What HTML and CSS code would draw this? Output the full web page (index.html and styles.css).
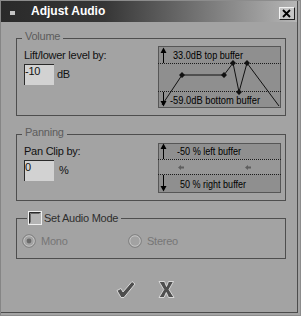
FILE: index.html
```html
<!DOCTYPE html>
<html>
<head>
<meta charset="utf-8">
<link rel="stylesheet" href="styles.css">
</head>
<body>
<div class="window">
  <div class="frame">
    <div class="titlebar">
      <span class="sysicon"></span>
      <span class="title">Adjust Audio</span>
      <span class="close">
        <svg width="14" height="11" viewBox="0 0 14 11"><path d="M3 2L10 9M10 2L3 9" stroke="#000" stroke-width="1.8" fill="none"/></svg>
      </span>
    </div>
    <div class="content">
      <div class="group vol">
        <span class="legend">Volume</span>
        <div class="col">
          <div class="lbl">Lift/lower level by:</div>
          <div class="field-row"><div class="input">-10</div><span class="unit">dB</span></div>
        </div>
        <svg class="graph vgraph" width="123" height="62" viewBox="0 0 123 62">
          <rect width="123" height="62" fill="#8f8f8f"/>
          <rect x="0.5" y="0.5" width="122" height="61" fill="none" stroke="#1c1c1c" stroke-dasharray="1 1"/>
          <path d="M0 17.5H123M0 45.5H123" stroke="#1c1c1c" stroke-dasharray="1 1" fill="none"/>
          <polyline points="4,59 24,29 66,29 75,17 81,46 89,17 121,60" fill="none" stroke="#111"/>
          <path d="M24 26L27 29L24 32L21 29Z M66 26L69 29L66 32L63 29Z M75 14L78 17L75 20L72 17Z M81 43L84 46L81 49L78 46Z M89 14L92 17L89 20L86 17Z" fill="#111"/>
          <path d="M5.5 5V17M5.5 46V57" stroke="#000" fill="none"/>
          <path d="M5.5 1.5L2.5 7H8.5Z M5.5 60.5L2.5 55H8.5Z" fill="#000"/>
          <text x="15" y="12.5" textLength="70" lengthAdjust="spacingAndGlyphs">33.0dB top buffer</text>
          <text x="12" y="58" textLength="90" lengthAdjust="spacingAndGlyphs">-59.0dB bottom buffer</text>
        </svg>
      </div>

      <div class="group pan">
        <span class="legend">Panning</span>
        <div class="col">
          <div class="lbl">Pan Clip by:</div>
          <div class="field-row"><div class="input">0</div><span class="unit pct">%</span></div>
        </div>
        <svg class="graph pgraph" width="123" height="50" viewBox="0 0 123 50">
          <rect width="123" height="50" fill="#8f8f8f"/>
          <rect y="16" width="123" height="15" fill="#979797"/>
          <rect x="0.5" y="0.5" width="122" height="49" fill="none" stroke="#1c1c1c" stroke-dasharray="1 1"/>
          <path d="M0 16.5H123M0 31.5H123" stroke="#1c1c1c" stroke-dasharray="1 1" fill="none"/>
          <path d="M5.5 4V16M5.5 32V45" stroke="#000" fill="none"/>
          <path d="M5.5 0.5L2.5 6H8.5Z M5.5 48.5L2.5 43H8.5Z" fill="#000"/>
          <path d="M20 24.5L23 22V23.5H26V25.5H23V27Z M87 24.5L90 22V23.5H93V25.5H90V27Z" fill="#5e5e5e"/>
          <text x="19" y="11.5" textLength="64" lengthAdjust="spacingAndGlyphs">-50 % left buffer</text>
          <text x="22" y="44.5" textLength="66" lengthAdjust="spacingAndGlyphs">50 % right buffer</text>
        </svg>
      </div>

      <div class="group mode">
        <span class="legend mode-legend">
          <svg class="check" width="14" height="14" viewBox="0 0 14 14">
            <rect x="0.5" y="0.5" width="13" height="13" fill="#b4b4b4" stroke="#efefef"/>
            <path d="M1.5 12.5V1.5H12.5" stroke="#2a2a2a" fill="none"/>
            <path d="M2.5 11.5V2.5H11.5" stroke="#6a6a6a" fill="none"/>
          </svg>
          <span>Set Audio Mode</span>
        </span>
        <div class="radios">
          <div class="radio">
            <svg width="14" height="14" viewBox="0 0 14 14">
              <circle cx="7" cy="7" r="6.3" fill="#a2a2a2" stroke="#7c7c7c"/>
              <circle cx="7" cy="7" r="5.2" fill="none" stroke="#c4c4c4"/>
              <circle cx="7" cy="7" r="2.4" fill="#6a6a6a"/>
            </svg>
            <span>Mono</span>
          </div>
          <div class="radio">
            <svg width="14" height="14" viewBox="0 0 14 14">
              <circle cx="7" cy="7" r="6.3" fill="#a2a2a2" stroke="#7c7c7c"/>
              <circle cx="7" cy="7" r="5.2" fill="none" stroke="#c4c4c4"/>
            </svg>
            <span>Stereo</span>
          </div>
        </div>
      </div>

      <div class="buttons">
        <svg class="ok" width="20" height="19" viewBox="0 0 20 19">
          <path d="M1 10.5L5 8.5L7 12L16 1.5L19 4L8 17.5H5Z" fill="#4e4e4e" stroke="#e2e2e2" stroke-width="0.9" stroke-linejoin="round"/>
        </svg>
        <svg class="cancel" width="17" height="19" viewBox="0 0 17 19">
          <path d="M1 1.5H6.5L8.5 6.5L10.5 1.5H15.5L11 9.5L16 17.5H10.5L8.3 12.5L6 17.5H1L5.8 9.5Z" fill="#4e4e4e" stroke="#e2e2e2" stroke-width="0.9" stroke-linejoin="round"/>
        </svg>
      </div>
    </div>
  </div>
</div>
</body>
</html>
```

FILE: styles.css
```css
* { box-sizing: border-box; }

body {
  margin: 0;
  font-family: "Liberation Sans", Arial, sans-serif;
  font-size: 11px;
  color: #111;
  background: #a3a3a3;
}

.window {
  width: 301px;
  height: 316px;
  background: #a3a3a3;
  border-left: 1px solid #858585;
  border-top: 1px solid #8c8c8c;
  border-right: 1px solid #8c8c8c;
  border-bottom: 1px solid #8c8c8c;
}

.frame {
  width: 297px;
  height: 312px;
  border-right: 1px solid #4c4c4c;
  border-bottom: 1px solid #4c4c4c;
  display: flex;
  flex-direction: column;
}

.titlebar {
  height: 21px;
  flex: none;
  display: flex;
  align-items: flex-start;
  background: linear-gradient(to right, #2a2a2a 0%, #363636 35%, #7a7a7a 70%, #b6b6b6 100%);
}

.sysicon {
  width: 5px;
  height: 4px;
  margin: 10px 0 0 9px;
  background: #c4c4c4;
}

.title {
  margin: 3px 0 0 16px;
  font-weight: bold;
  font-size: 12px;
  line-height: 15px;
  color: #fff;
  flex: 1;
}

.close {
  width: 16px;
  height: 13px;
  margin: 6px 2px 0 0;
  background: #c6c6c6;
  border-top: 1px solid #f2f2f2;
  border-left: 1px solid #f2f2f2;
  border-right: 1px solid #1e1e1e;
  border-bottom: 1px solid #1e1e1e;
  display: flex;
}

.content {
  flex: 1;
  display: flex;
  flex-direction: column;
  padding: 16px 11px 0 15px;
  letter-spacing: -0.25px;
}

.group {
  position: relative;
  border: 1px solid #4e4e4e;
  display: flex;
  justify-content: space-between;
  align-items: flex-start;
  padding: 0 4px 0 7px;
  flex: none;
}

.vol { height: 78px; }
.pan { height: 67px; margin-top: 18px; }
.mode { height: 41px; margin-top: 17px; padding-left: 5px; }

.legend {
  position: absolute;
  top: -9px;
  left: 5px;
  padding: 0 3px;
  background: #a3a3a3;
  line-height: 13px;
  color: #5c5c5c;
}

.mode-legend {
  top: -8px;
  left: 10px;
  padding: 0 3px 0 1px;
  display: flex;
  align-items: center;
  gap: 2px;
  color: #2e2e2e;
}

.check { display: block; }

.col { margin-top: 10px; }

.lbl { line-height: 13px; }

.field-row {
  margin-top: 2px;
  display: flex;
  align-items: center;
}

.input {
  width: 30px;
  height: 21px;
  background: #d2d2d2;
  border-top: 1px solid #2a2a2a;
  border-left: 1px solid #2a2a2a;
  line-height: 13px;
}

.unit { margin-left: 3px; line-height: 13px; }
.unit.pct { margin-left: 5px; }

.graph { display: block; }
.vgraph { margin-top: 7px; }
.pgraph { margin-top: 8px; }

.graph text {
  font-family: "Liberation Sans", Arial, sans-serif;
  font-size: 11px;
  fill: #000;
  letter-spacing: 0;
}

.radios {
  margin-top: 15px;
  display: grid;
  grid-template-columns: 106px auto;
}

.radio {
  display: flex;
  align-items: center;
  gap: 5px;
  color: #767676;
  line-height: 13px;
}

.radio svg { display: block; }

.buttons {
  margin-top: 21px;
  padding-left: 100px;
  display: flex;
  gap: 22px;
}
```
